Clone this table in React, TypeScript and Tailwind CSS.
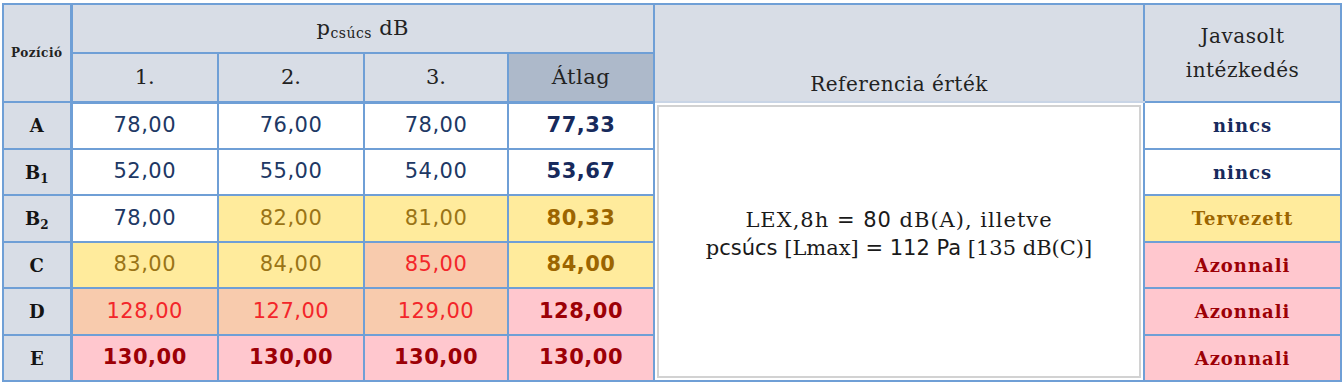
import React from 'react';

type Tone = 'white' | 'yellow' | 'peach' | 'pink';

interface Row {
  label: React.ReactNode;
  values: [string, Tone][];
  avg: [string, Tone];
  action: [string, Tone];
  boldValues?: boolean;
}

const serif = "font-['DejaVu_Serif',serif]";
const sans = "font-['DejaVu_Sans',sans-serif]";

const valueTone: Record<Tone, string> = {
  white: 'bg-white text-[#203864]',
  yellow: 'bg-[#ffeb9c] text-[#9a7416]',
  peach: 'bg-[#f8cbad] text-[#f3262a]',
  pink: 'bg-[#ffc7ce] text-[#9c0006]',
};

const strongTone: Record<Tone, string> = {
  white: 'bg-white text-[#172a5c]',
  yellow: 'bg-[#ffeb9c] text-[#9c6500]',
  peach: 'bg-[#f8cbad] text-[#c00000]',
  pink: 'bg-[#ffc7ce] text-[#9c0006]',
};

function Sub({ children }: { children: React.ReactNode }) {
  return <span className="relative top-[4px] text-[12px]">{children}</span>;
}

const rows: Row[] = [
  {
    label: 'A',
    values: [['78,00', 'white'], ['76,00', 'white'], ['78,00', 'white']],
    avg: ['77,33', 'white'],
    action: ['nincs', 'white'],
  },
  {
    label: <>B<Sub>1</Sub></>,
    values: [['52,00', 'white'], ['55,00', 'white'], ['54,00', 'white']],
    avg: ['53,67', 'white'],
    action: ['nincs', 'white'],
  },
  {
    label: <>B<Sub>2</Sub></>,
    values: [['78,00', 'white'], ['82,00', 'yellow'], ['81,00', 'yellow']],
    avg: ['80,33', 'yellow'],
    action: ['Tervezett', 'yellow'],
  },
  {
    label: 'C',
    values: [['83,00', 'yellow'], ['84,00', 'yellow'], ['85,00', 'peach']],
    avg: ['84,00', 'yellow'],
    action: ['Azonnali', 'pink'],
  },
  {
    label: 'D',
    values: [['128,00', 'peach'], ['127,00', 'peach'], ['129,00', 'peach']],
    avg: ['128,00', 'pink'],
    action: ['Azonnali', 'pink'],
  },
  {
    label: 'E',
    values: [['130,00', 'pink'], ['130,00', 'pink'], ['130,00', 'pink']],
    avg: ['130,00', 'pink'],
    action: ['Azonnali', 'pink'],
    boldValues: true,
  },
];

const rowHeights = ['h-[47px]', 'h-[46px]', 'h-[47px]', 'h-[46px]', 'h-[47px]', 'h-[46px]'];

// shared cell frame; vertical alignment is set per cell
const cell = 'border-2 border-[#6f9fd6] text-center p-0';

export default function App() {
  return (
    <div className="min-h-screen bg-white pl-[2px] pt-[3px]">
      <table className="w-[1338px] table-fixed border-collapse">
        <colgroup>
          <col className="w-[68px]" />
          <col className="w-[147px]" />
          <col className="w-[146px]" />
          <col className="w-[144px]" />
          <col className="w-[146px]" />
          <col className="w-[490px]" />
          <col className="w-[197px]" />
        </colgroup>
        <thead>
          <tr className="h-[49px]">
            <th
              rowSpan={2}
              className={`${cell} border-r-[3px] bg-[#d8dde6] align-middle ${serif} text-[12px] font-bold tracking-[0.5px] text-[#222]`}
            >
              Pozíció
            </th>
            <th
              colSpan={4}
              className={`${cell} bg-[#d8dde6] align-middle ${serif} text-[21px] font-normal text-[#222]`}
            >
              <span className="tracking-[0.5px]">
                p<span className="relative top-[3px] text-[14px]">csúcs</span> dB
              </span>
            </th>
            <th
              rowSpan={2}
              className={`${cell} border-b-[#c9d5e6] bg-[#d8dde6] pb-[2px] align-bottom ${serif} text-[20px] font-normal tracking-[0.5px] text-[#222]`}
            >
              Referencia érték
            </th>
            <th
              rowSpan={2}
              className={`${cell} bg-[#d8dde6] align-middle ${serif} text-[20px] font-normal leading-[34px] tracking-[0.5px] text-[#222]`}
            >
              Javasolt
              <br />
              intézkedés
            </th>
          </tr>
          <tr className="h-[49px]">
            {['1.', '2.', '3.'].map((h) => (
              <th
                key={h}
                className={`${cell} border-b-[3px] bg-[#d8dde6] align-middle ${serif} text-[21px] font-normal text-[#222]`}
              >
                {h}
              </th>
            ))}
            <th
              className={`${cell} border-b-[3px] bg-[#adb9ca] align-middle ${serif} text-[21px] font-normal tracking-[0.5px] text-[#222]`}
            >
              Átlag
            </th>
          </tr>
        </thead>
        <tbody>
          {rows.map((row, i) => (
            <tr key={i} className={rowHeights[i]}>
              <td
                className={`${cell} border-r-[3px] bg-[#d8dde6] align-middle ${serif} text-[18px] font-bold text-[#141414]`}
              >
                {row.label}
              </td>
              {row.values.map(([v, tone], j) => (
                <td
                  key={j}
                  className={`${cell} align-middle ${sans} text-[21px] tracking-[0.5px] ${
                    row.boldValues ? `font-bold ${strongTone[tone]}` : valueTone[tone]
                  }`}
                >
                  {v}
                </td>
              ))}
              <td
                className={`${cell} align-middle ${sans} text-[21px] font-bold tracking-[0.5px] ${strongTone[row.avg[1]]}`}
              >
                {row.avg[0]}
              </td>
              {i === 0 && (
                <td
                  rowSpan={6}
                  className={`${cell} border-t-0 bg-white pb-[16px] align-middle text-[21px] leading-[27px] text-[#1a1a1a] shadow-[inset_0_0_0_2px_#ffffff,inset_0_0_0_4px_#d2d2d2]`}
                >
                  <div className="tracking-[1px]">
                    <span className={serif}>LEX,8h</span>
                    <span className={sans}> = 80 </span>
                    <span className={serif}>dB(A), illetve</span>
                  </div>
                  <div>
                    <span className={serif}>p</span>
                    <span className={sans}>csúcs </span>
                    <span className={serif}>[Lmax]</span>
                    <span className={sans}> = 112 Pa </span>
                    <span className={serif}>[135 dB(C)]</span>
                  </div>
                </td>
              )}
              <td
                className={`${cell} align-middle ${serif} text-[18px] font-bold tracking-[1px] ${strongTone[row.action[1]]}`}
              >
                {row.action[0]}
              </td>
            </tr>
          ))}
        </tbody>
      </table>
    </div>
  );
}
